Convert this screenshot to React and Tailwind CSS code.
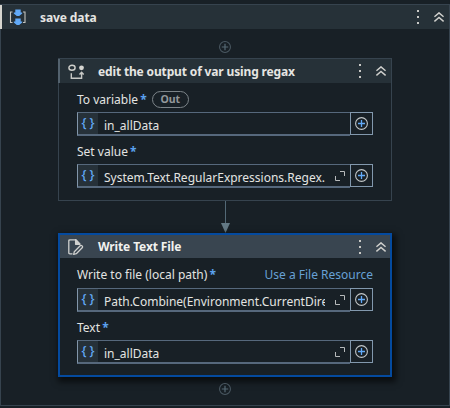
function PlusCircle({ className = '', ring = '#c3c7c9', plus = '#62aaf8', size = 13 }) {
  return (
    <svg width={size} height={size} viewBox="0 0 13 13" fill="none" className={className}>
      <circle cx="6.5" cy="6.5" r="5.9" stroke={ring} strokeWidth="1.1" />
      <path d="M6.5 3v7M3 6.5h7" stroke={plus} strokeWidth="1.3" />
    </svg>
  );
}

function HeaderActions() {
  return (
    <div className="flex items-center">
      <svg width="2" height="14" viewBox="0 0 2 14" fill="#c9c9c6">
        <path d="M0 0h2v2H0zM0 6h2v2H0zM0 12h2v2H0z" />
      </svg>
      <svg width="10" height="10" viewBox="0 0 10 10" fill="none" stroke="#d0d0cd" strokeWidth="1.5" className="ml-[15px]">
        <path d="M.4 4.800 5 .9l4.600 3.900M.4 9.400 5 5.500l4.600 3.900" />
      </svg>
    </div>
  );
}

function SequenceIcon() {
  return (
    <svg width="17" height="16" viewBox="0 0 17 16" fill="none">
      <path d="M3.500 3H1.500v10.500h2M14 3h2v10.500h-2" stroke="#c4c4be" strokeWidth="1.100" />
      <path d="M6.300 .5h5.400v3h1.500v1L10.200 7H7.800L4.800 4.500v-1h1.500zM6.300 9.500h5.400v3h1.500v1L10.200 16H7.800L4.800 13.500v-1h1.500z" fill="#62aaf8" />
    </svg>
  );
}

function AssignIcon() {
  return (
    <svg width="17" height="17" viewBox="0 0 17 17" fill="none">
      <ellipse cx="4" cy="4.800" rx="3.100" ry="2.500" stroke="#cfcfcb" strokeWidth="1.400" />
      <circle cx="13.500" cy="4.800" r="2.400" fill="#d6d6d2" />
      <path d="M3.300 10.300v5h10.300V10.300M11.500 11.400l2.100-2.200 2.100 2.200" stroke="#c6c7c4" strokeWidth="1.400" />
    </svg>
  );
}

function EditFileIcon() {
  return (
    <svg width="16" height="16" viewBox="0 0 16 16" fill="none" stroke="#d0d1cf" strokeWidth="1.300" strokeLinejoin="round">
      <path d="M4.500 14.800H1.900Q.8 14.800.8 13.700V1.900Q.8.800 1.900.800H7.800L12 5.200" />
      <path d="M7.600.800V5.300H12z" fill="#d0d1cf" />
      <path d="m6.300 12.700 5.900-5.900q1-.8 1.900.1t.1 1.900l-5.900 5.900-2.600.6z" />
    </svg>
  );
}

function Field({ value, expandable }) {
  return (
    <div className="flex h-6 w-[296px]">
      <div className="flex w-[273px] border border-b-2 border-r-0 border-[#56687c] border-l-[#8296aa]">
        <div className="flex w-5 shrink-0 justify-center gap-[3px] bg-[#263139] text-[13px] font-medium leading-[19px] text-[#62aaf8]">
          <span>{'{'}</span>
          <span>{'}'}</span>
        </div>
        <div className="ml-[6px] h-[21px] w-[221px] overflow-hidden whitespace-nowrap text-[12px] leading-[25px] text-[#e3e4e2]">
          {value}
        </div>
        {expandable && (
          <svg width="10" height="10" viewBox="0 0 10 10" fill="none" stroke="#b7babb" className="ml-[10px] mt-[6px] shrink-0">
            <path d="M.5 5v4.500H5M5 .5h4.500V5" />
          </svg>
        )}
      </div>
      <div className="flex h-[23px] w-[23px] items-center justify-center border border-[#8298ad]">
        <PlusCircle />
      </div>
    </div>
  );
}

function Label({ children }) {
  return (
    <span className="whitespace-nowrap text-[12px] leading-4 text-[#e3e4e2]">
      {children} <span className="-ml-px font-bold text-[#5ba2ef]">*</span>
    </span>
  );
}

export default function App() {
  return (
    <div className="h-[408px] w-[450px] overflow-hidden bg-[#182026] pt-1 font-['Noto_Sans',sans-serif]">
      <div className="h-[402px] border border-[#36434e]">
        <header className="-ml-px flex h-6 items-center justify-between border-l-2 border-[#d6d5cf] bg-[#263138] pl-[7px] pr-[5px]">
          <div className="flex items-center gap-[14px]">
            <SequenceIcon />
            <h1 className="pt-0.5 text-[12px] font-bold tracking-[-0.1px] text-[#e5e5e2]">save data</h1>
          </div>
          <HeaderActions />
        </header>

        <main className="flex flex-col pl-[57px]">
          <div className="flex h-[29px] w-[334px] justify-center pt-3">
            <PlusCircle size={12} ring="#4b5963" plus="#566974" />
          </div>

          <section className="h-[143px] w-[334px] border border-[#36434e]">
            <header className="-ml-px flex h-6 items-center justify-between border-l-2 border-[#53626e] bg-[#263138] pl-2 pr-[5px]">
              <div className="flex items-center gap-[13px]">
                <AssignIcon />
                <h2 className="whitespace-nowrap pt-0.5 text-[12px] font-bold tracking-[-0.15px] text-[#e5e5e2]">edit the output of var using regax</h2>
              </div>
              <HeaderActions />
            </header>
            <div className="pl-[18px]">
              <div className="flex h-[29px] items-start pt-[9px]">
                <Label>To variable</Label>
                <span className="-mt-px ml-[5px] flex h-[17px] w-[37px] items-center justify-center rounded-full border border-[#7c8489] text-[10.5px] font-bold text-[#92979a]">
                  Out
                </span>
              </div>
              <Field value="in_allData" />
              <div className="flex h-7 items-start pt-2">
                <Label>Set value</Label>
              </div>
              <Field value="System.Text.RegularExpressions.Regex." expandable />
            </div>
          </section>

          <div className="flex h-8 w-[334px] justify-center">
            <svg width="10" height="32" viewBox="0 0 10 32">
              <path d="M5.500 0v23" stroke="#536976" />
              <path d="M1 22h9L5.500 32z" fill="#637985" />
            </svg>
          </div>

          <section className="h-[144px] w-[334px] border-2 border-[#044a9f] bg-[#182026] shadow-[2px_3px_6px_2px_rgba(0,0,0,0.6)]">
            <header className="flex h-[23px] items-center justify-between bg-[#394550] pl-2 pr-1">
              <div className="flex items-center gap-[14px]">
                <EditFileIcon />
                <h2 className="text-[12px] font-bold tracking-[-0.13px] text-[#f2f2ef]">Write Text File</h2>
              </div>
              <HeaderActions />
            </header>
            <div className="pl-[17px]">
              <div className="flex h-[30px] w-[296px] items-start justify-between pt-[9px]">
                <Label>Write to file (local path)</Label>
                <span className="whitespace-nowrap text-[12px] leading-4 text-[#67a0d5]">Use a File Resource</span>
              </div>
              <Field value="Path.Combine(Environment.CurrentDire" expandable />
              <div className="flex h-7 items-start pt-2">
                <Label>Text</Label>
              </div>
              <Field value="in_allData" expandable />
            </div>
          </section>

          <div className="flex w-[334px] justify-center pt-[6px]">
            <PlusCircle size={12} ring="#4b5963" plus="#566974" />
          </div>
        </main>
      </div>
    </div>
  );
}
